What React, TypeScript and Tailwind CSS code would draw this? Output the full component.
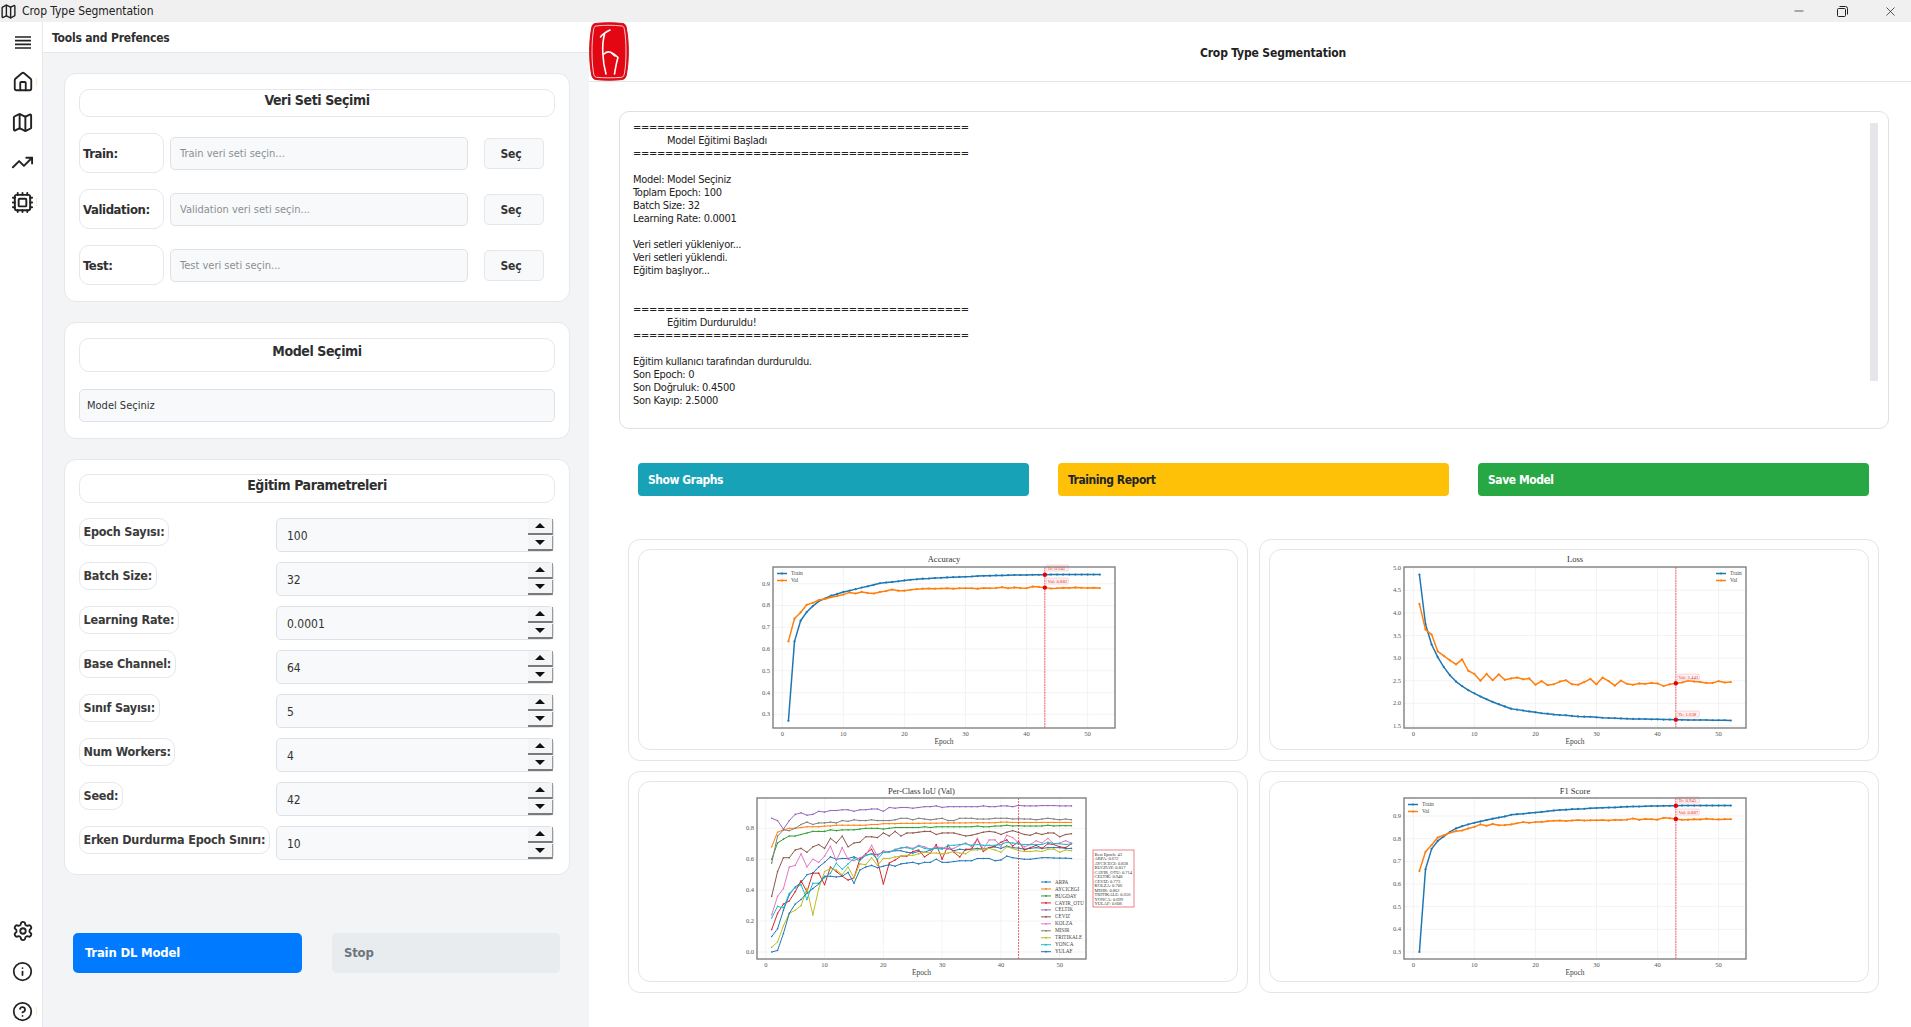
import { Home, Map, TrendingUp, Cpu, Settings, Info, CircleHelp, Minus, X } from 'lucide-react';

const UI_FONT = '"DejaVu Sans Condensed", "Open Sans", sans-serif';

type Series = { name: string; color: string; values: number[]; width?: number };

type ChartConfig = {
  title: string;
  frame: [number, number, number, number]; // left, top, right, bottom
  x0: number; // pixel of epoch 0
  xStep: number; // pixels per epoch
  yRef: [number, number]; // value, pixel
  yScale: number; // pixels per unit
  yTicks: number[];
  decimals: number;
  series: Series[];
};

const BLUE = '#1f77b4';
const ORANGE = '#ff7f0e';

const accuracy: ChartConfig = {
  title: 'Accuracy',
  frame: [134, 17, 476, 178],
  x0: 143.3,
  xStep: 6.106,
  yRef: [0.9, 33.7],
  yScale: 217.7,
  yTicks: [0.3, 0.4, 0.5, 0.6, 0.7, 0.8, 0.9],
  decimals: 1,
  series: [
    {
      name: 'Train',
      color: BLUE,
      values: [0.27, 0.635, 0.73, 0.77, 0.797, 0.82, 0.832, 0.845, 0.853, 0.862, 0.868, 0.875, 0.882, 0.888, 0.895, 0.902, 0.905, 0.908, 0.911, 0.915, 0.918, 0.92, 0.923, 0.924, 0.926, 0.927, 0.929, 0.93, 0.931, 0.932, 0.933, 0.935, 0.936, 0.937, 0.938, 0.938, 0.939, 0.94, 0.94, 0.94, 0.941, 0.941, 0.941, 0.942, 0.942, 0.942, 0.942, 0.942, 0.942, 0.942, 0.942, 0.942],
    },
    {
      name: 'Val',
      color: ORANGE,
      values: [0.635, 0.74, 0.768, 0.803, 0.812, 0.825, 0.83, 0.838, 0.843, 0.85, 0.86, 0.855, 0.862, 0.857, 0.855, 0.862, 0.866, 0.873, 0.868, 0.868, 0.872, 0.875, 0.877, 0.878, 0.877, 0.878, 0.879, 0.877, 0.879, 0.879, 0.879, 0.877, 0.88, 0.879, 0.88, 0.884, 0.879, 0.883, 0.88, 0.879, 0.887, 0.885, 0.882, 0.878, 0.879, 0.881, 0.88, 0.883, 0.881, 0.88, 0.881, 0.88],
    },
  ],
};

const loss: ChartConfig = {
  title: 'Loss',
  frame: [134, 17, 476, 178],
  x0: 143.3,
  xStep: 6.106,
  yRef: [5, 17.7],
  yScale: 45.2,
  yTicks: [1.5, 2, 2.5, 3, 3.5, 4, 4.5, 5],
  decimals: 1,
  series: [
    {
      name: 'Train',
      color: BLUE,
      values: [4.85, 3.75, 3.3, 3.02, 2.8, 2.62, 2.48, 2.38, 2.29, 2.22, 2.15, 2.09, 2.03, 1.98, 1.93, 1.88, 1.86, 1.84, 1.82, 1.8, 1.78, 1.77, 1.75, 1.74, 1.735, 1.72, 1.71, 1.705, 1.7, 1.69, 1.68, 1.675, 1.67, 1.665, 1.66, 1.655, 1.655, 1.65, 1.645, 1.645, 1.64, 1.64, 1.638, 1.635, 1.63, 1.63, 1.63, 1.63, 1.625, 1.625, 1.625, 1.62],
    },
    {
      name: 'Val',
      color: ORANGE,
      values: [4.2, 3.63, 3.52, 3.15, 3.05, 2.95, 2.86, 2.97, 2.72, 2.65, 2.5, 2.65, 2.51, 2.64, 2.52, 2.55, 2.57, 2.53, 2.55, 2.41, 2.49, 2.4, 2.42, 2.48, 2.51, 2.42, 2.41, 2.47, 2.54, 2.42, 2.57, 2.49, 2.39, 2.5, 2.43, 2.41, 2.44, 2.43, 2.45, 2.44, 2.38, 2.42, 2.443, 2.46, 2.5, 2.48, 2.47, 2.45, 2.45, 2.49, 2.46, 2.47],
    },
  ],
};

const f1: ChartConfig = {
  title: 'F1 Score',
  frame: [134, 16, 476, 177],
  x0: 143.3,
  xStep: 6.106,
  yRef: [0.9, 34],
  yScale: 226.7,
  yTicks: [0.3, 0.4, 0.5, 0.6, 0.7, 0.8, 0.9],
  decimals: 1,
  series: [
    {
      name: 'Train',
      color: BLUE,
      values: [0.3, 0.665, 0.755, 0.79, 0.81, 0.83, 0.845, 0.855, 0.863, 0.87, 0.876, 0.882, 0.888, 0.893, 0.898, 0.905, 0.908, 0.91, 0.913, 0.915, 0.918, 0.921, 0.924, 0.926, 0.928, 0.93, 0.931, 0.932, 0.934, 0.935, 0.936, 0.937, 0.938, 0.94, 0.941, 0.942, 0.942, 0.943, 0.944, 0.944, 0.945, 0.945, 0.945, 0.946, 0.946, 0.946, 0.946, 0.946, 0.946, 0.946, 0.946, 0.946],
    },
    {
      name: 'Val',
      color: ORANGE,
      values: [0.657, 0.742, 0.772, 0.805, 0.815, 0.826, 0.833, 0.836, 0.845, 0.852, 0.863, 0.857, 0.865, 0.859, 0.86, 0.863, 0.868, 0.873, 0.87, 0.873, 0.874, 0.877, 0.879, 0.88, 0.878, 0.88, 0.882, 0.88, 0.881, 0.881, 0.882, 0.88, 0.883, 0.882, 0.884, 0.889, 0.883, 0.887, 0.886, 0.884, 0.892, 0.89, 0.887, 0.883, 0.884, 0.886, 0.885, 0.888, 0.886, 0.885, 0.886, 0.886],
    },
  ],
};

const iou: ChartConfig = {
  title: 'Per-Class IoU (Val)',
  frame: [118, 16, 447, 177],
  x0: 126.8,
  xStep: 5.878,
  yRef: [0, 170],
  yScale: 154.6,
  yTicks: [0, 0.2, 0.4, 0.6, 0.8],
  decimals: 1,
  series: [
    { name: 'ARPA', color: BLUE, width: 1, values: [0.1, 0.15, 0.27, 0.37, 0.42, 0.45, 0.5, 0.51, 0.55, 0.58, 0.615, 0.6, 0.605, 0.605, 0.615, 0.6, 0.625, 0.635, 0.63, 0.645, 0.65, 0.655, 0.655, 0.645, 0.64, 0.65, 0.645, 0.66, 0.675, 0.67, 0.67, 0.655, 0.665, 0.66, 0.665, 0.67, 0.665, 0.675, 0.68, 0.67, 0.685, 0.675, 0.672, 0.665, 0.67, 0.675, 0.67, 0.675, 0.675, 0.675, 0.67, 0.67] },
    { name: 'AYCICEGI', color: ORANGE, width: 1, values: [0.68, 0.775, 0.79, 0.8, 0.8, 0.805, 0.81, 0.81, 0.81, 0.815, 0.815, 0.82, 0.82, 0.82, 0.82, 0.82, 0.82, 0.825, 0.825, 0.83, 0.83, 0.83, 0.832, 0.832, 0.832, 0.832, 0.833, 0.833, 0.833, 0.834, 0.835, 0.835, 0.835, 0.835, 0.836, 0.836, 0.836, 0.836, 0.836, 0.84, 0.84, 0.838, 0.838, 0.838, 0.838, 0.838, 0.838, 0.838, 0.838, 0.838, 0.838, 0.838] },
    { name: 'BUGDAY', color: '#2ca02c', width: 1, values: [0.6, 0.705, 0.73, 0.75, 0.75, 0.76, 0.77, 0.78, 0.78, 0.78, 0.79, 0.785, 0.79, 0.79, 0.79, 0.795, 0.8, 0.8, 0.8, 0.795, 0.8, 0.805, 0.805, 0.805, 0.805, 0.805, 0.81, 0.805, 0.81, 0.81, 0.81, 0.81, 0.81, 0.81, 0.81, 0.815, 0.81, 0.81, 0.815, 0.815, 0.82, 0.815, 0.817, 0.815, 0.815, 0.815, 0.815, 0.82, 0.815, 0.817, 0.817, 0.817] },
    { name: 'CAYIR_OTU', color: '#d62728', width: 1, values: [0.145, 0.25, 0.31, 0.33, 0.39, 0.46, 0.39, 0.51, 0.51, 0.435, 0.55, 0.52, 0.49, 0.465, 0.48, 0.6, 0.635, 0.665, 0.59, 0.44, 0.575, 0.595, 0.62, 0.62, 0.65, 0.66, 0.615, 0.64, 0.695, 0.6, 0.69, 0.645, 0.615, 0.665, 0.665, 0.73, 0.65, 0.675, 0.685, 0.71, 0.725, 0.685, 0.714, 0.66, 0.675, 0.69, 0.67, 0.7, 0.695, 0.68, 0.675, 0.7] },
    { name: 'CELTIK', color: '#9467bd', width: 1, values: [0.865, 0.85, 0.795, 0.85, 0.89, 0.9, 0.885, 0.89, 0.91, 0.905, 0.915, 0.915, 0.92, 0.92, 0.91, 0.92, 0.92, 0.925, 0.925, 0.91, 0.935, 0.93, 0.935, 0.935, 0.93, 0.935, 0.94, 0.94, 0.945, 0.935, 0.94, 0.94, 0.94, 0.94, 0.94, 0.94, 0.945, 0.94, 0.94, 0.945, 0.945, 0.94, 0.948, 0.945, 0.945, 0.945, 0.947, 0.947, 0.947, 0.945, 0.945, 0.945] },
    { name: 'CEVIZ', color: '#8c564b', width: 1, values: [0.36, 0.52, 0.61, 0.61, 0.66, 0.67, 0.645, 0.68, 0.695, 0.67, 0.735, 0.705, 0.75, 0.68, 0.705, 0.71, 0.745, 0.745, 0.74, 0.77, 0.75, 0.78, 0.75, 0.77, 0.77, 0.775, 0.78, 0.78, 0.76, 0.77, 0.77, 0.77, 0.76, 0.75, 0.755, 0.765, 0.775, 0.78, 0.775, 0.76, 0.775, 0.785, 0.773, 0.76, 0.755, 0.77, 0.76, 0.77, 0.77, 0.745, 0.76, 0.765] },
    { name: 'KOLZA', color: '#e377c2', width: 1, values: [0.24, 0.36, 0.41, 0.55, 0.56, 0.635, 0.55, 0.6, 0.58, 0.62, 0.685, 0.59, 0.675, 0.6, 0.59, 0.61, 0.625, 0.69, 0.62, 0.655, 0.645, 0.665, 0.67, 0.68, 0.67, 0.69, 0.68, 0.665, 0.68, 0.675, 0.665, 0.67, 0.69, 0.705, 0.68, 0.735, 0.665, 0.725, 0.725, 0.68, 0.755, 0.74, 0.706, 0.68, 0.695, 0.72, 0.705, 0.735, 0.7, 0.705, 0.72, 0.705] },
    { name: 'MISIR', color: '#7f7f7f', width: 1, values: [0.575, 0.75, 0.79, 0.785, 0.8, 0.825, 0.84, 0.825, 0.835, 0.835, 0.84, 0.835, 0.85, 0.845, 0.855, 0.85, 0.85, 0.855, 0.85, 0.85, 0.85, 0.855, 0.865, 0.865, 0.855, 0.865, 0.86, 0.855, 0.86, 0.865, 0.85, 0.85, 0.865, 0.865, 0.865, 0.86, 0.86, 0.86, 0.865, 0.865, 0.865, 0.86, 0.862, 0.86, 0.86, 0.855, 0.86, 0.865, 0.86, 0.855, 0.86, 0.855] },
    { name: 'TRITIKALE', color: '#bcbd22', width: 1, values: [0.03, 0.065, 0.17, 0.25, 0.27, 0.3, 0.41, 0.24, 0.41, 0.52, 0.54, 0.53, 0.5, 0.55, 0.48, 0.57, 0.565, 0.61, 0.56, 0.605, 0.605, 0.615, 0.62, 0.625, 0.625, 0.635, 0.645, 0.64, 0.64, 0.635, 0.64, 0.65, 0.64, 0.635, 0.66, 0.66, 0.665, 0.67, 0.66, 0.645, 0.68, 0.67, 0.656, 0.65, 0.65, 0.655, 0.65, 0.665, 0.665, 0.645, 0.66, 0.655] },
    { name: 'YONCA', color: '#17becf', width: 1, values: [0.22, 0.295, 0.285, 0.38, 0.415, 0.435, 0.34, 0.445, 0.445, 0.48, 0.51, 0.575, 0.535, 0.57, 0.605, 0.59, 0.625, 0.635, 0.6, 0.645, 0.645, 0.66, 0.675, 0.675, 0.665, 0.685, 0.67, 0.665, 0.67, 0.665, 0.69, 0.69, 0.695, 0.7, 0.69, 0.695, 0.69, 0.69, 0.69, 0.695, 0.71, 0.705, 0.699, 0.695, 0.695, 0.695, 0.695, 0.71, 0.7, 0.7, 0.695, 0.7] },
    { name: 'YULAF', color: BLUE, width: 1, values: [0, 0.01, 0.12, 0.25, 0.31, 0.34, 0.38, 0.41, 0.44, 0.49, 0.49, 0.485, 0.49, 0.515, 0.445, 0.53, 0.55, 0.56, 0.545, 0.555, 0.565, 0.555, 0.57, 0.575, 0.58, 0.57, 0.58, 0.58, 0.6, 0.58, 0.58, 0.585, 0.59, 0.59, 0.59, 0.605, 0.605, 0.605, 0.59, 0.595, 0.62, 0.61, 0.605, 0.6, 0.6, 0.605, 0.61, 0.61, 0.608, 0.607, 0.607, 0.605] },
  ],
};

const bestLines = ['Best Epoch: 43', 'ARPA: 0.672', 'AYCICEGI: 0.838', 'BUGDAY: 0.817', 'CAYIR_OTU: 0.714', 'CELTIK: 0.948', 'CEVIZ: 0.773', 'KOLZA: 0.706', 'MISIR: 0.862', 'TRITIKALE: 0.656', 'YONCA: 0.699', 'YULAF: 0.606'];

type Tag = { text: string; dx: number; y: number; value: number };

const Chart = ({ config, tags, legendRight }: { config: ChartConfig; tags?: Tag[]; legendRight?: boolean }) => {
  const [left, top, right, bottom] = config.frame;
  const px = (epoch: number) => config.x0 + epoch * config.xStep;
  const py = (v: number) => config.yRef[1] - (v - config.yRef[0]) * config.yScale;
  const isIou = config.series.length > 2;
  const bestX = px(43);

  return (
    <svg width="600" height="201" viewBox="0 0 600 201" fontFamily='"Liberation Serif", serif' className="block">
      <text x={(left + right) / 2} y="12" textAnchor="middle" fontSize="8.5" fill="#333">{config.title}</text>

      {[0, 10, 20, 30, 40, 50].map((e) => (
        <g key={e}>
          <line x1={px(e)} x2={px(e)} y1={top} y2={bottom} stroke="#eeeeee" strokeWidth="0.7" />
          <text x={px(e)} y={bottom + 8} textAnchor="middle" fontSize="6.500" fill="#555">{e}</text>
        </g>
      ))}
      {config.yTicks.map((t) => (
        <g key={t}>
          <line x1={left} x2={right} y1={py(t)} y2={py(t)} stroke="#eeeeee" strokeWidth="0.7" />
          <text x={left - 3} y={py(t) + 2} textAnchor="end" fontSize="6.500" fill="#555">{t.toFixed(config.decimals)}</text>
        </g>
      ))}

      {config.series.map((s) => (
        <g key={s.name}>
          <polyline
            points={s.values.map((v, i) => `${px(i + 1)},${py(v)}`).join(' ')}
            fill="none"
            stroke={s.color}
            strokeWidth={s.width ?? 1.5}
            strokeLinejoin="round"
          />
          {s.values.map((v, i) => (
            <circle key={i} cx={px(i + 1)} cy={py(v)} r={isIou ? 0.8 : 1.1} fill={s.color} />
          ))}
        </g>
      ))}

      <line x1={bestX} x2={bestX} y1={top} y2={bottom} stroke="#e01b24" strokeWidth={isIou ? 1 : 0.7} strokeDasharray={isIou ? '2 1' : '2 0.6'} opacity={isIou ? 0.65 : 1} />

      {tags?.map((t) => (
        <g key={t.text}>
          <circle cx={bestX} cy={py(t.value)} r="2.2" fill="#e3000f" />
          <rect x={bestX + t.dx} y={t.y} width="22" height="6" rx="1" fill="#fff1f1" stroke="#f5b5b5" strokeWidth="0.5" />
          <text x={bestX + t.dx + 1.2} y={t.y + 4.6} fontSize="4.8" fill="#d33">{t.text}</text>
        </g>
      ))}

      <rect x={left} y={top} width={right - left} height={bottom - top} fill="none" stroke="#808080" strokeWidth="1.4" />
      <text x={(left + right) / 2} y={bottom + 15.500} textAnchor="middle" fontSize="7.500" fill="#444">Epoch</text>

      {!isIou &&
        config.series.map((s, i) => {
          const lx = legendRight ? right - 30 : left + 4;
          const ly = top + 6.5 + i * 7;
          return (
            <g key={s.name}>
              <line x1={lx} x2={lx + 10} y1={ly} y2={ly} stroke={s.color} strokeWidth="1.3" />
              <circle cx={lx + 5} cy={ly} r="1.1" fill={s.color} />
              <text x={lx + 14} y={ly + 1.8} fontSize="5.500" fill="#444">{s.name}</text>
            </g>
          );
        })}

      {isIou &&
        config.series.map((s, i) => {
          const ly = 100 + i * 6.97;
          return (
            <g key={s.name}>
              <line x1="402" x2="412" y1={ly} y2={ly} stroke={s.color} strokeWidth="1" />
              <circle cx="407" cy={ly} r="0.9" fill={s.color} />
              <text x="416" y={ly + 1.6} fontSize="5.200" fill="#444">{s.name}</text>
            </g>
          );
        })}

      {isIou && (
        <g>
          <rect x="454" y="68" width="41" height="57" fill="#ffffff" stroke="#e8606a" strokeWidth="0.8" />
          {bestLines.map((line, i) => (
            <text key={line} x="455.500" y={73.5 + i * 4.5} fontSize="4.500" fill="#333">{line}</text>
          ))}
        </g>
      )}
    </svg>
  );
};

const ChartCard = ({ children }: { children: React.ReactNode }) => (
  <div className="w-[620px] h-[222px] rounded-[12px] border border-[#e5e5e5] bg-white p-[9px]">
    <div className="w-[600px] h-[201px] rounded-[12px] border border-[#e5e5e5] bg-white overflow-hidden">{children}</div>
  </div>
);

const HamburgerIcon = () => (
  <svg width="18" height="13" viewBox="0 0 18 13" fill="none" stroke="#222" strokeWidth="1.700">
    <path d="M1 1h16M1 4.700h16M1 8.300h16M1 12h16" />
  </svg>
);

const RestoreIcon = () => (
  <svg width="11" height="11" viewBox="0 0 11 11" fill="none" stroke="#222" strokeWidth="1">
    <rect x="0.5" y="2.5" width="8" height="8" rx="1" />
    <path d="M2.5 0.5h6a2 2 0 0 1 2 2v6" />
  </svg>
);

const HacettepeLogo = () => (
  <svg width="40" height="59" viewBox="0 0 40 59">
    <path d="M6 1.5C14 .5 26 .5 34 1.5 36.500 2 37 4 37.500 7 40 20 40 39 37.500 52 37 55 36 57 33.500 57.500 25 58.500 15 58.500 6.500 57.500 4 57 3 55 2.500 52 0 39 0 20 2.500 7 3 4 3.500 2 6 1.500Z" fill="#e30613" stroke="#c9141f" strokeWidth="1" />
    <path d="M7 4C15 3 25 3 33 4 35 4.300 35 6 35.500 8 37.500 20 37.500 39 35.500 51 35 53.500 34.500 55 32.500 55.300 25 56 15 56 7.500 55.300 5.500 55 5 53.500 4.500 51 2.500 39 2.500 20 4.500 8 5 6 5 4.300 7 4Z" fill="none" stroke="#ffffff" strokeWidth="0.8" />
    <path d="M21 8C17 10 13.500 12 11.500 15M15.500 12.500C12.500 22 13.500 40 17 52M15 32C19 28 24 30 29 35.500C27.500 40 26.500 46 25.500 52M22.500 31C24 32 25 33 26 34" fill="none" stroke="#ffffff" strokeWidth="1.6" strokeLinecap="round" />
  </svg>
);

const RailIcon = ({ children, tick }: { children: React.ReactNode; tick?: boolean }) => (
  <div className="w-full h-[20px] flex items-center justify-center relative">
    {children}
    {tick && <span className="absolute right-[5px] top-[6px] w-px h-[8px] bg-[#f8ecc4]" />}
  </div>
);

const Rail = () => (
  <aside className="w-[43px] shrink-0 bg-white border-r border-[#e5e7eb] flex flex-col items-center text-[#222] pl-[3px]">
    <div className="mt-[14px] mb-[23px] h-[13px] flex items-center">
      <HamburgerIcon />
    </div>
    <div className="w-full flex flex-col gap-[20px]">
      <RailIcon tick><Home size={22} strokeWidth={2} /></RailIcon>
      <RailIcon><Map size={23} strokeWidth={2} /></RailIcon>
      <RailIcon><TrendingUp size={23} strokeWidth={2} /></RailIcon>
      <RailIcon tick><Cpu size={23} strokeWidth={2} /></RailIcon>
    </div>
    <div className="mt-auto mb-[6px] w-full flex flex-col gap-[20px]">
      <RailIcon><Settings size={22} strokeWidth={2} /></RailIcon>
      <RailIcon><Info size={21} strokeWidth={2} /></RailIcon>
      <RailIcon tick><CircleHelp size={21} strokeWidth={2} /></RailIcon>
    </div>
  </aside>
);

const CardTitle = ({ text, className }: { text: string; className: string }) => (
  <div className={`${className} rounded-[10px] border border-[#e5e7eb] bg-white flex justify-center text-[14px] tracking-[-0.4px] leading-[20px] font-bold text-[#2f2f2f]`}>
    {text}
  </div>
);

const DatasetRow = ({ label, placeholder }: { label: string; placeholder: string }) => (
  <div className="flex items-center">
    <div className="w-[85px] h-[40px] rounded-[10px] border border-[#e5e7eb] bg-white flex items-center pl-[3px] pt-[2px] text-[13px] tracking-[-0.4px] font-bold text-[#2f2f2f]">
      {label}
    </div>
    <div className="ml-[6px] w-[298px] h-[33px] rounded-[5px] border border-[#dee2e6] bg-[#f8f9fa] flex items-center pl-[9px] pt-[2px] text-[11px] text-[#8a8f94]">
      {placeholder}
    </div>
    <div className="ml-[16px] w-[60px] h-[31px] rounded-[5px] border border-[#e5e7eb] bg-[#f8f9fa] flex items-center justify-center pr-[6px] pt-[1px] text-[12px] tracking-[-0.2px] font-bold text-[#333]">
      Seç
    </div>
  </div>
);

const SpinButton = ({ down }: { down?: boolean }) => (
  <div className="flex-1 flex items-center justify-center border-b-2 border-r border-b-[#7a7a7a] border-r-[#9a9a9a] bg-[#f4f5f6]">
    <span className={`w-0 h-0 border-x-[5px] border-x-transparent ${down ? 'border-t-[5px] border-t-[#111]' : 'border-b-[5px] border-b-[#111]'}`} />
  </div>
);

const ParamRow = ({ label, value }: { label: string; value: string }) => (
  <div className="flex h-[34px] items-start">
    <div className="w-[197px] shrink-0">
      <span className="inline-flex h-[28px] items-center rounded-[10px] border border-[#e5e7eb] bg-white px-[3.500px] pt-[1px] text-[12.500px] tracking-[-0.2px] font-bold text-[#3a3a3a] whitespace-nowrap">
        {label}
      </span>
    </div>
    <div className="w-[278px] h-[34px] rounded-[5px] border border-[#dee2e6] bg-[#f8f9fa] flex items-center justify-between pl-[10px] text-[12px] text-[#333]">
      <span className="pt-[2px]">{value}</span>
      <div className="w-[25px] h-full flex flex-col gap-px">
        <SpinButton />
        <SpinButton down />
      </div>
    </div>
  </div>
);

const params: [string, string][] = [
  ['Epoch Sayısı:', '100'],
  ['Batch Size:', '32'],
  ['Learning Rate:', '0.0001'],
  ['Base Channel:', '64'],
  ['Sınıf Sayısı:', '5'],
  ['Num Workers:', '4'],
  ['Seed:', '42'],
  ['Erken Durdurma Epoch Sınırı:', '10'],
];

const RULE = '='.repeat(42);

const logLines = [
  RULE,
  '            Model Eğitimi Başladı',
  RULE,
  '',
  'Model: Model Seçiniz',
  'Toplam Epoch: 100',
  'Batch Size: 32',
  'Learning Rate: 0.0001',
  '',
  'Veri setleri yükleniyor...',
  'Veri setleri yüklendi.',
  'Eğitim başlıyor...',
  '',
  '',
  RULE,
  '            Eğitim Durduruldu!',
  RULE,
  '',
  'Eğitim kullanıcı tarafından durduruldu.',
  'Son Epoch: 0',
  'Son Doğruluk: 0.4500',
  'Son Kayıp: 2.5000',
];

const LeftPanel = () => (
  <section className="w-[546px] shrink-0 bg-[#f3f4f6] flex flex-col">
    <div className="h-[31px] bg-white border-b border-[#e5e7eb] flex items-center pl-[9px] pt-[1px] text-[12px] tracking-[-0.2px] font-bold text-[#2f2f2f]">
      Tools and Prefences
    </div>
    <div className="pl-[21px] w-[527px] pt-[20px] flex flex-col gap-[20px]">
      <div className="h-[229px] rounded-[12px] border border-[#e5e7eb] bg-white px-[14px] pt-[15px]">
        <CardTitle text="Veri Seti Seçimi" className="h-[28px]" />
        <div className="mt-[16px] flex flex-col gap-[16px]">
          <DatasetRow label="Train:" placeholder="Train veri seti seçin..." />
          <DatasetRow label="Validation:" placeholder="Validation veri seti seçin..." />
          <DatasetRow label="Test:" placeholder="Test veri seti seçin..." />
        </div>
      </div>
      <div className="h-[117px] rounded-[12px] border border-[#e5e7eb] bg-white px-[14px] pt-[15px]">
        <CardTitle text="Model Seçimi" className="h-[34px] pt-[2px]" />
        <div className="mt-[17px] h-[33px] rounded-[5px] border border-[#dee2e6] bg-[#f8f9fa] flex items-center pl-[7px] pt-[1px] text-[11px] text-[#333]">
          Model Seçiniz
        </div>
      </div>
      <div className="h-[416px] rounded-[12px] border border-[#e5e7eb] bg-white px-[14px] pt-[14px]">
        <CardTitle text="Eğitim Parametreleri" className="h-[29px]" />
        <div className="mt-[15px] flex flex-col gap-[10px]">
          {params.map(([label, value]) => (
            <ParamRow key={label} label={label} value={value} />
          ))}
        </div>
      </div>
    </div>
    <div className="mt-[58px] pl-[30px] flex gap-[30px] text-[13px] tracking-[-0.2px] font-bold">
      <div className="w-[229px] h-[40px] rounded-[5px] bg-[#007bff] text-white flex items-center pl-[12px]">Train DL Model</div>
      <div className="w-[228px] h-[40px] rounded-[5px] bg-[#e9ecef] text-[#6c757d] flex items-center pl-[12px]">Stop</div>
    </div>
  </section>
);

const ActionButton = ({ text, className }: { text: string; className: string }) => (
  <div className={`w-[391px] h-[33px] rounded-[4px] flex items-center pl-[10px] text-[12px] tracking-[-0.45px] font-bold ${className}`}>{text}</div>
);

const RightPanel = () => (
  <main className="flex-1 bg-white flex flex-col min-w-0">
    <header className="h-[60px] shrink-0 border-b border-[#e5e5e5] flex items-center relative">
      <HacettepeLogo />
      <div className="flex-1 flex justify-center pl-[6px] pt-[2px] text-[12px] tracking-[-0.15px] font-bold text-[#222]">Crop Type Segmentation</div>
    </header>
    <div className="mt-[29px] ml-[30px] w-[1270px] h-[318px] rounded-[10px] border border-[#e0e0e0] pl-[13px] pt-[9px] relative text-[11px] tracking-[-0.3px] leading-[13px] text-[#222]">
      {logLines.map((line, i) => (
        <div key={i} className="h-[13px] whitespace-pre">{line}</div>
      ))}
      <div className="absolute right-[10px] top-[11px] w-[8px] h-[258px] bg-[#e6e6ea]" />
    </div>
    <div className="mt-[34px] ml-[49px] flex gap-[29px]">
      <ActionButton text="Show Graphs" className="bg-[#17a2b8] text-white" />
      <ActionButton text="Training Report" className="bg-[#ffc107] text-[#212529]" />
      <ActionButton text="Save Model" className="bg-[#28a745] text-white" />
    </div>
    <div className="mt-[43px] ml-[39px] grid grid-cols-[620px_620px] gap-x-[11px] gap-y-[10px] w-fit">
      <ChartCard>
        <Chart
          config={accuracy}
          tags={[
            { text: 'Tr: 0.941', dx: 1.5, y: 15, value: 0.941 },
            { text: 'Val: 0.882', dx: 1.5, y: 28, value: 0.882 },
          ]}
        />
      </ChartCard>
      <ChartCard>
        <Chart
          legendRight
          config={loss}
          tags={[
            { text: 'Val: 2.443', dx: 1.5, y: 124, value: 2.443 },
            { text: 'Tr: 1.638', dx: 1.5, y: 161, value: 1.638 },
          ]}
        />
      </ChartCard>
      <ChartCard>
        <Chart config={iou} />
      </ChartCard>
      <ChartCard>
        <Chart
          config={f1}
          tags={[
            { text: 'Tr: 0.945', dx: 1.5, y: 15, value: 0.945 },
            { text: 'Val: 0.887', dx: 1.5, y: 27, value: 0.887 },
          ]}
        />
      </ChartCard>
    </div>
  </main>
);

export default function App() {
  return (
    <div className="w-[1911px] h-[1027px] flex flex-col overflow-hidden bg-white" style={{ fontFamily: UI_FONT }}>
      <div className="h-[22px] shrink-0 bg-[#f0f0f0] flex items-center text-[12px] tracking-[-0.05px] text-[#222]">
        <Map size={17} strokeWidth={2} />
        <span className="ml-[5px]">Crop Type Segmentation</span>
        <div className="ml-auto flex items-center text-[#222]">
          <Minus size={14} strokeWidth={1.2} className="mr-[31px]" />
          <span className="mr-[35px]"><RestoreIcon /></span>
          <X size={15} strokeWidth={1.2} className="mr-[13px]" />
        </div>
      </div>
      <div className="flex flex-1 min-h-0">
        <Rail />
        <LeftPanel />
        <RightPanel />
      </div>
    </div>
  );
}
